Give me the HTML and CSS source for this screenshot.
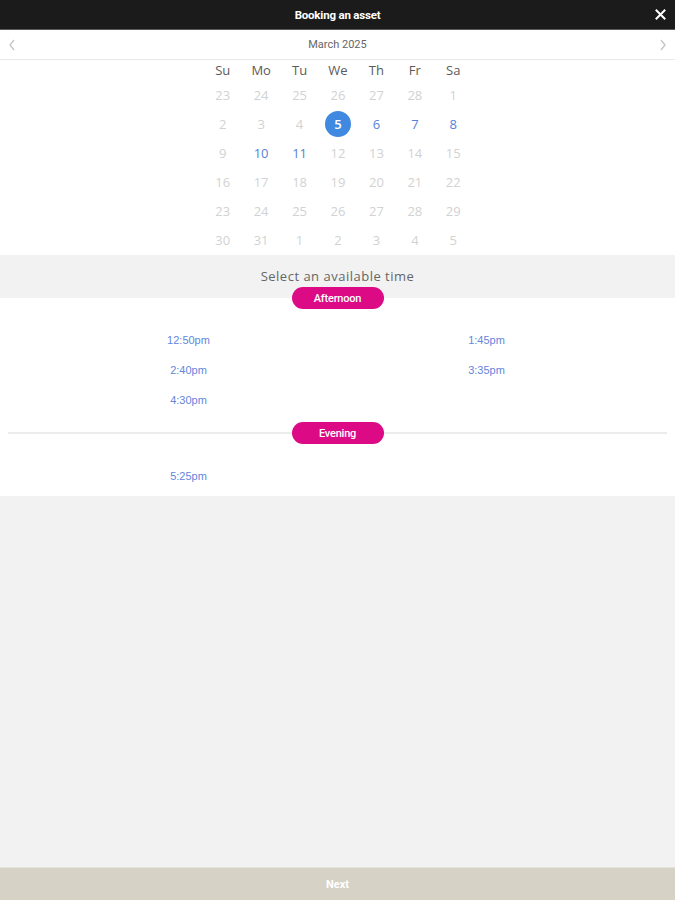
FILE: index.html
```html
<!DOCTYPE html>
<html lang="en">
<head>
<meta charset="utf-8">
<title>Booking an asset</title>
<link rel="stylesheet" href="styles.css">
</head>
<body>
<div class="page">
  <header class="topbar">
    <span class="title">Booking an asset</span>
    <button class="close" aria-label="Close">
      <svg width="11" height="11" viewBox="0 0 11 11"><path d="M1.5 1.5 L9.5 9.5 M9.5 1.5 L1.5 9.5" stroke="#fff" stroke-width="2" stroke-linecap="square"/></svg>
    </button>
  </header>
  <div class="monthbar">
    <svg class="chev" width="8" height="12" viewBox="0 0 8 12"><path d="M6 1 L2 6 L6 11" fill="none" stroke="#c4c4c4" stroke-width="1.3"/></svg>
    <span class="month">March 2025</span>
    <svg class="chev" width="8" height="12" viewBox="0 0 8 12"><path d="M2 1 L6 6 L2 11" fill="none" stroke="#c4c4c4" stroke-width="1.3"/></svg>
  </div>
  <section class="calendar">
    <div class="grid">
      <div class="wd">Su</div><div class="wd">Mo</div><div class="wd">Tu</div><div class="wd">We</div><div class="wd">Th</div><div class="wd">Fr</div><div class="wd">Sa</div>
      <div class="d">23</div><div class="d">24</div><div class="d">25</div><div class="d">26</div><div class="d">27</div><div class="d">28</div><div class="d">1</div>
      <div class="d">2</div><div class="d">3</div><div class="d">4</div><div class="d sel"><span>5</span></div><div class="d av">6</div><div class="d av">7</div><div class="d av">8</div>
      <div class="d">9</div><div class="d av">10</div><div class="d av">11</div><div class="d">12</div><div class="d">13</div><div class="d">14</div><div class="d">15</div>
      <div class="d">16</div><div class="d">17</div><div class="d">18</div><div class="d">19</div><div class="d">20</div><div class="d">21</div><div class="d">22</div>
      <div class="d">23</div><div class="d">24</div><div class="d">25</div><div class="d">26</div><div class="d">27</div><div class="d">28</div><div class="d">29</div>
      <div class="d">30</div><div class="d">31</div><div class="d">1</div><div class="d">2</div><div class="d">3</div><div class="d">4</div><div class="d">5</div>
    </div>
  </section>
  <div class="band">Select an available time</div>
  <section class="times">
    <div class="pillrow first"><span class="pill">Afternoon</span></div>
    <div class="slots">
      <a class="slot">12:50pm</a><a class="slot">1:45pm</a>
      <a class="slot">2:40pm</a><a class="slot">3:35pm</a>
      <a class="slot">4:30pm</a><span></span>
    </div>
    <div class="pillrow divider"><span class="line"></span><span class="pill">Evening</span><span class="line"></span></div>
    <div class="slots evening">
      <a class="slot">5:25pm</a><span></span>
    </div>
  </section>
  <div class="spacer"></div>
  <footer class="footer">Next</footer>
</div>
</body>
</html>
```
FILE: styles.css
```css
* { box-sizing: border-box; }
html, body { margin: 0; padding: 0; }
body {
  background: #f2f2f2;
  font-family: "Open Sans", "Noto Sans", sans-serif;
}
.page {
  display: flex;
  flex-direction: column;
  min-height: 100vh;
}
.topbar {
  height: 30px;
  background: #1b1b1b;
  border-bottom: 1px solid #5a5a5a;
  display: flex;
  align-items: center;
  justify-content: center;
  position: relative;
}
.title {
  color: #fff;
  font-family: Roboto, "Liberation Sans", sans-serif;
  font-weight: 700;
  font-size: 11.5px;
  letter-spacing: -0.2px;
}
.close {
  position: absolute;
  right: 9px;
  top: 9px;
  background: none;
  border: 0;
  padding: 0;
  width: 11px;
  height: 11px;
  display: flex;
}
.monthbar {
  height: 30px;
  background: #fff;
  border-bottom: 1px solid #e8e8e8;
  display: flex;
  align-items: center;
  justify-content: space-between;
  padding: 0 8px;
}
.month {
  font-family: Roboto, "Liberation Sans", sans-serif;
  font-size: 11px;
  color: #666;
}
.calendar {
  background: #fff;
  height: 195px;
}
.grid {
  width: 270px;
  margin: 0 auto;
  display: grid;
  grid-template-columns: repeat(7, 1fr);
  grid-template-rows: 20px repeat(6, 29px);
  padding-left: 1px;
}
.wd, .d {
  display: flex;
  align-items: center;
  justify-content: center;
  font-size: 13px;
}
.wd { color: #5a5a5a; }
.d { color: #d2d2d2; }
.d.av { color: #5582d6; }
.d.sel span {
  width: 26px;
  height: 26px;
  border-radius: 50%;
  background: #3f8ae0;
  color: #fff;
  display: flex;
  align-items: center;
  justify-content: center;
  font-weight: 600;
}
.band {
  height: 43px;
  padding-top: 12px;
  text-align: center;
  font-size: 13px;
  line-height: 18px;
  color: #666;
  letter-spacing: 0.5px;
}
.times {
  background: #fff;
  padding-bottom: 5px;
}
.pillrow {
  display: flex;
  align-items: center;
  justify-content: center;
}
.pillrow.first { margin-top: -11px; }
.pillrow.divider { margin: 7px 8px 0; }
.line {
  flex: 1;
  height: 1.5px;
  background: #ececec;
}
.pill {
  width: 92px;
  height: 22px;
  border-radius: 11px;
  background: #dd0a86;
  color: #fff;
  font-family: Roboto, "Liberation Sans", sans-serif;
  font-size: 11px;
  font-weight: 500;
  display: flex;
  align-items: center;
  justify-content: center;
  letter-spacing: -0.2px;
}
.slots {
  width: 596px;
  margin: 0 auto;
  padding-top: 16px;
  display: grid;
  grid-template-columns: 1fr 1fr;
  grid-auto-rows: 30px;
}
.slots.evening { padding-top: 17px; }
.slot {
  display: flex;
  align-items: center;
  justify-content: center;
  font-family: "Liberation Sans", Arial, sans-serif;
  font-size: 11px;
  color: #6586dc;
}
.spacer { flex: 1; }
.footer {
  height: 33px;
  background: #d6d3c6;
  border-top: 1px solid #e4e2da;
  color: #fff;
  font-family: Roboto, "Liberation Sans", sans-serif;
  font-weight: 700;
  font-size: 11px;
  display: flex;
  align-items: center;
  justify-content: center;
}
```
